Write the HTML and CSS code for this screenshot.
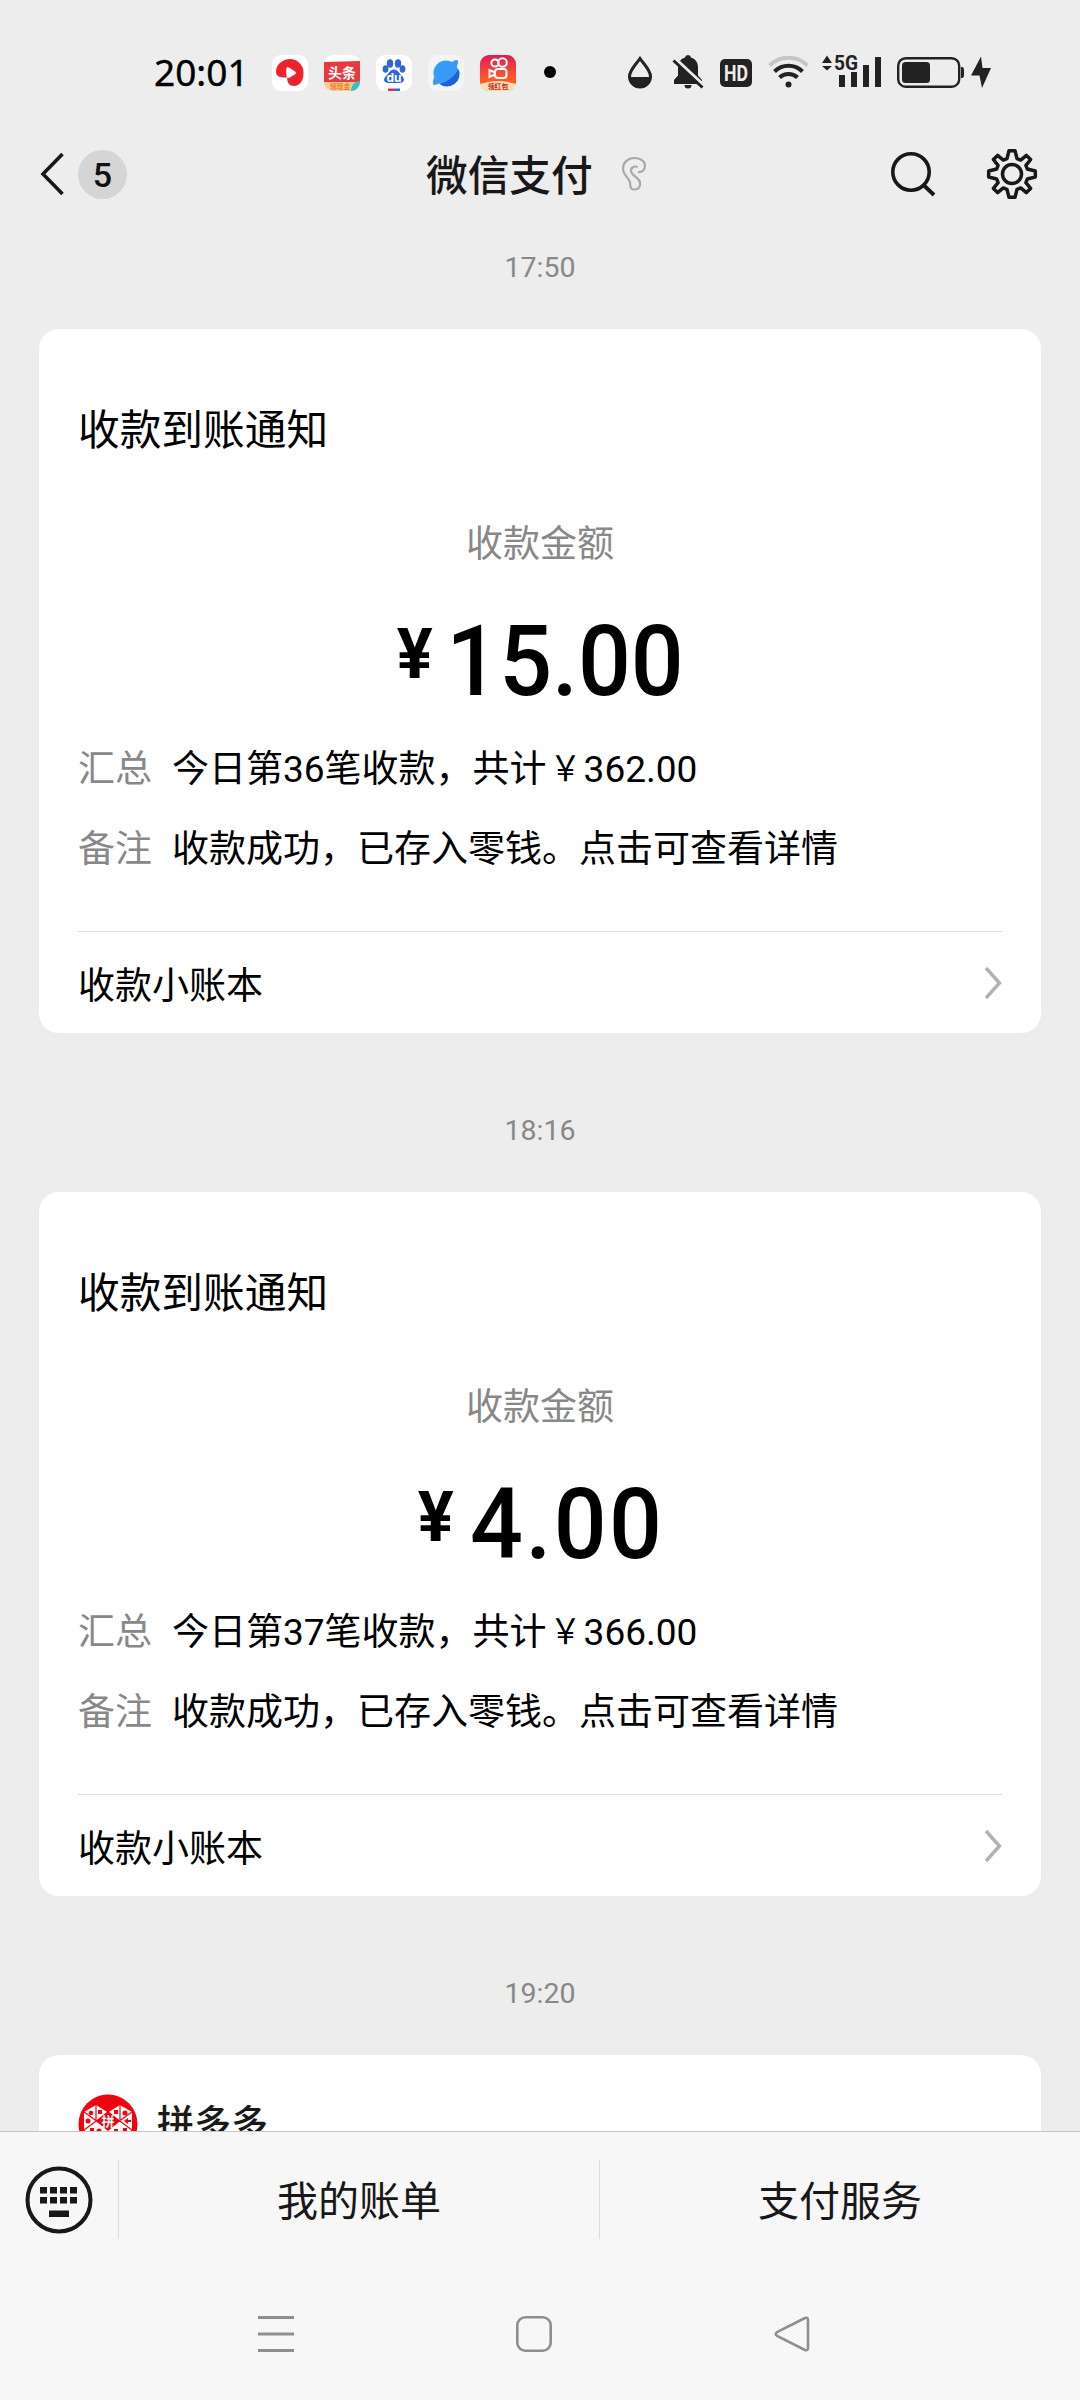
FILE: index.html
```html
<!DOCTYPE html>
<html lang="zh-CN">
<head>
<meta charset="utf-8">
<title>微信支付</title>
<link rel="stylesheet" href="styles.css">
</head>
<body>
<div class="screen">
  <div class="status">
    <div class="clock">20:01</div>
    <div class="apps">
      <svg width="36" height="36" viewBox="0 0 36 36"><rect width="36" height="36" rx="9" fill="#fff"/><path d="M18 4a13.500 13.500 0 0 1 13.500 14c0 8-4 13-9.500 13-5 0-6.500-3-7-8.500-5 .5-11-.5-11-5.500C4 9.500 10.500 4 18 4z" fill="#f0222b"/><path d="M14.500 13c.5-1 2-.8 3.300 0l5 3.300c1.500 1 1.500 2.200 0 3.100l-5 3c-1.600.9-3 .5-3.100-1-.6-3-.6-5.600-.2-8.400z" fill="#fff"/></svg>
      <svg width="36" height="36" viewBox="0 0 36 36"><rect width="36" height="36" rx="9" fill="#fff"/><path d="M0 7 36 6v22H0z" fill="#e8393f"/><path d="M0 27h36a9 9 0 0 1-9 9H9a9 9 0 0 1-9-9z" fill="#fbc98d"/><path d="M36 26v2a9 9 0 0 1-9 8c0-6 4-10 9-10z" fill="#35c0cf"/><text x="18" y="23" text-anchor="middle" class="toutiao">头条</text><text x="16" y="34" text-anchor="middle" class="tag tag-orange">领现金</text></svg>
      <svg width="36" height="36" viewBox="0 0 36 36"><rect width="36" height="36" rx="9" fill="#fff"/><g fill="#2f66d8"><ellipse cx="14" cy="8.500" rx="3.200" ry="4.200"/><ellipse cx="22" cy="8.500" rx="3.200" ry="4.200"/><ellipse cx="9.500" cy="14" rx="2.900" ry="3.800"/><ellipse cx="26.500" cy="14" rx="2.900" ry="3.800"/><path d="M18 14.500c4 0 5.500 4.500 8.500 7 3 3 1 6.500-3 6.500H12.500c-4 0-6-3.500-3-6.500 3-2.500 4.500-7 8.500-7z"/><path d="M18 33.500h6v2.500h-6z"/></g><path d="M12 33.500h6v2.500h-6z" fill="#e2343c"/><text x="18" y="26.500" text-anchor="middle" class="du">du</text></svg>
      <svg width="36" height="36" viewBox="0 0 36 36"><rect width="36" height="36" rx="9" fill="#f2f4f6"/><circle cx="18" cy="18" r="12.500" fill="#379af6"/><path d="M30.500 14a12.500 12.500 0 0 1-19 15C21 26 27 21 30.500 14z" fill="#2160d8"/><path d="M24 7c3-2 6-3 6 0 0 2-1 4-2 6zM6 22c-1 4-1.500 8 0 8s4-1 6-2z" fill="#379af6"/></svg>
      <svg width="36" height="36" viewBox="0 0 36 36"><defs><linearGradient id="ks" x1="0" y1="0" x2="0" y2="1"><stop offset="0" stop-color="#dc1c58"/><stop offset=".65" stop-color="#ff5a26"/></linearGradient></defs><rect width="36" height="36" rx="9" fill="url(#ks)"/><path d="M0 29Q18 23 36 29a9 9 0 0 1-9 7H9a9 9 0 0 1-9-7z" fill="#ffe0ae"/><g fill="none" stroke="#fff" stroke-width="2"><circle cx="15" cy="8" r="3.600"/><circle cx="22.500" cy="7.500" r="4.300"/><rect x="15" y="14" width="11.500" height="9" rx="3"/><path d="M15 17.500 9.500 15v7L15 19.500"/></g><text x="18" y="34" text-anchor="middle" class="tag tag-red">领红包</text></svg>
    </div>
    <div class="more-dot"></div>
    <div class="system">
      <svg width="24" height="34" viewBox="628 55 24 34"><path d="M640 58.500c4 6 10.500 11.500 10.500 18a10.500 10.500 0 0 1-21 0c0-6.500 6.500-12 10.500-18z" fill="none" stroke="#222" stroke-width="3"/><path d="M629.500 77h21a10.500 10.500 0 0 1-21 0z" fill="#222"/></svg>
      <svg class="bell" width="32" height="34" viewBox="672 55 32 34"><path d="M688 55a3 3 0 0 1 3 2.500c5 1.500 7 5.500 7 10v8l4 4.500v4h-28v-4l4-4.500v-8c0-4.500 2-8.500 7-10a3 3 0 0 1 3-2.500zM684.500 85h7a3.500 3.500 0 0 1-7 0z" fill="#222"/><path d="m675 59 29 27" stroke="#ededed" stroke-width="4"/><path d="m673.500 60.500 29 27" stroke="#222" stroke-width="3"/></svg>
      <svg class="hd" width="32" height="34" viewBox="720 55 32 34"><rect x="720" y="59" width="32" height="28" rx="5" fill="#222"/><text x="736" y="81" text-anchor="middle" class="hd-text" textLength="24" lengthAdjust="spacingAndGlyphs">HD</text></svg>
      <svg class="wifi" width="42" height="34" viewBox="768 55 42 34"><g fill="none" stroke-width="4"><path d="M769.500 65.500a27 27 0 0 1 38 0" stroke="#c6c6c6"/><path d="M774.500 71.500a20 20 0 0 1 28 0M779.500 77.500a13 13 0 0 1 18 0" stroke="#222"/></g><circle cx="788.500" cy="84.500" r="3" fill="#222"/></svg>
      <svg class="signal" width="60" height="34" viewBox="822 55 60 34"><path d="m822 63 5-7.500 5 7.500zM822 66h10l-5 4.500z" fill="#222"/><text x="834" y="70" class="net" textLength="24" lengthAdjust="spacingAndGlyphs">5G</text><path d="M839 75h6v12h-6zM851 72h6v15h-6zM863 65h6v22h-6zM875 57h6v30h-6z" fill="#222"/></svg>
      <svg class="battery" width="68" height="34" viewBox="897 55 68 34"><rect x="898.200" y="58.200" width="61" height="28.500" rx="7.500" fill="none" stroke="#222" stroke-width="2.400"/><rect x="902" y="62" width="28" height="21" rx="3.500" fill="#222"/><path d="M961 67c3 0 3 1 3 5.500s0 5.500-3 5.500z" fill="#222"/></svg>
      <svg class="bolt" width="20" height="34" viewBox="971 55 20 34"><path d="M981 56.500 971 75.500h8.500L982 88l9-20h-8.500z" fill="#222"/></svg>
    </div>
  </div>
  <div class="navbar">
    <svg class="back" width="24" height="44" viewBox="0 0 24 44"><path d="M22.500 2 3 22l19.500 20" fill="none" stroke="#181818" stroke-width="3.600"/></svg>
    <div class="badge">5</div>
    <div class="nav-title">微信支付</div>
    <svg class="ear" width="26" height="36" viewBox="0 0 26 36"><path d="M17 16c4.500.5 7-2.500 7-6.500C24 5 19.500 2 13.500 2 6.500 2 2 6.800 2 12.500c0 7 6 9 7 14 .6 3.500-.5 7 4.500 7 4.500 0 6-3 5.500-7-.6-5-8-6-9-11.500-.5-3.200 3.300-5.500 6.500-4" fill="none" stroke="#a9a9a9" stroke-width="2.200"/></svg>
    <svg class="search" width="48" height="48" viewBox="0 0 48 48"><circle cx="22" cy="22" r="18.200" fill="none" stroke="#181818" stroke-width="3.600"/><path d="m34.500 35 10.500 10" stroke="#181818" stroke-width="3.800"/></svg>
    <svg class="gear" width="52" height="52" viewBox="-26 -26 52 52"><g fill="none" stroke="#181818" stroke-width="3.500" stroke-linejoin="round"><circle r="9.500"/><path d="M-3 -23.300H3L5 -15.300 8.700 -13.900 14.400 -18.600 18.600 -14.400 13.900 -8.700 15.300 -5 23.300 -3V3L15.300 5 13.900 8.700 18.600 14.400 14.400 18.600 8.700 13.900 5 15.300 3 23.300H-3L-5 15.300 -8.700 13.900 -14.400 18.600 -18.600 14.400 -13.900 8.700 -15.300 5 -23.300 3V-3L-15.300 -5 -13.900 -8.700 -18.600 -14.400 -14.400 -18.600 -8.700 -13.900 -5 -15.300Z"/></g></svg>
  </div>
  <div class="chat">
    <div class="time">17:50</div>
    <div class="card">
      <div class="card-title">收款到账通知</div>
      <div class="label">收款金额</div>
      <div class="amount"><span class="yen">¥</span><span class="num">15.00</span></div>
      <div class="row"><span class="key">汇总</span><span>今日第36笔收款，共计<span class="yuan">￥</span>362.00</span></div>
      <div class="row"><span class="key">备注</span><span>收款成功，已存入零钱。点击可查看详情</span></div>
      <div class="card-foot"><span>收款小账本</span><svg width="18" height="34" viewBox="0 0 18 34"><path d="m2 2 13.500 15L2 32" fill="none" stroke="#b2b2b2" stroke-width="3.400"/></svg></div>
    </div>
    <div class="time">18:16</div>
    <div class="card">
      <div class="card-title">收款到账通知</div>
      <div class="label">收款金额</div>
      <div class="amount amount-short"><span class="yen">¥</span><span class="num">4.00</span></div>
      <div class="row"><span class="key">汇总</span><span>今日第37笔收款，共计<span class="yuan">￥</span>366.00</span></div>
      <div class="row"><span class="key">备注</span><span>收款成功，已存入零钱。点击可查看详情</span></div>
      <div class="card-foot"><span>收款小账本</span><svg width="18" height="34" viewBox="0 0 18 34"><path d="m2 2 13.500 15L2 32" fill="none" stroke="#b2b2b2" stroke-width="3.400"/></svg></div>
    </div>
    <div class="time">19:20</div>
    <div class="card shop">
      <svg width="60" height="60" viewBox="0 0 60 60"><circle cx="30" cy="30" r="29.500" fill="#f4000f"/><path d="M18 11 30 18.500 42 11 54 18v18L30 52 6 36V18z" fill="#fff"/><path d="M18 11v15M42 11v15M6 18l24 17M54 18 30 35M6 36l24-17.500M54 36 30 18.500" stroke="#f4000f" stroke-width="1.200"/><path d="m30 17 12 10-12 10-12-10z" fill="#f4000f"/><g fill="#f4000f"><circle cx="13" cy="19" r="2.300"/><path d="M20 16h4v4h-4zM36 16h4v4h-4z"/><circle cx="47" cy="19" r="2.500"/><circle cx="10" cy="27" r="2.500"/><path d="m46 27 4-3v2h3v2h-3v2z"/><circle cx="21" cy="37" r="2.500"/><path d="M36 35h4v4h-4zM45 34h4v4h-4zM12 34h4v4h-4z"/></g><text x="30" y="31.500" text-anchor="middle" class="pin">拼</text></svg>
      <span>拼多多</span>
    </div>
  </div>
  <div class="menu">
    <div class="kb"><svg width="68" height="68" viewBox="0 0 68 68"><circle cx="34" cy="34" r="31.500" fill="none" stroke="#181818" stroke-width="4"/><path d="M15 21h7v6.500h-7zM25 21h7v6.500h-7zM35 21h7v6.500h-7zM45 21h7v6.500h-7zM15 31h7v6.500h-7zM25 31h7v6.500h-7zM35 31h7v6.500h-7zM45 31h7v6.500h-7zM24 44.500h20v6.500H24z" fill="#181818"/></svg></div>
    <div class="menu-item">我的账单</div>
    <div class="menu-item">支付服务</div>
  </div>
  <div class="sysnav">
    <svg width="36" height="38" viewBox="0 0 36 38"><path d="M0 2.500h36M0 19h36M0 35.500h36" stroke="#8e8e8e" stroke-width="3"/></svg>
    <svg width="36" height="38" viewBox="0 0 36 38"><rect x="1.300" y="2.300" width="33.400" height="33.400" rx="8" fill="none" stroke="#8e8e8e" stroke-width="2.600"/></svg>
    <svg width="36" height="38" viewBox="0 0 36 38"><path d="M31 3 3 17.200q-2.500 1.800 0 3.600L31 35q3 1 3-2V5q0-3-3-2z" fill="none" stroke="#8e8e8e" stroke-width="2.600" stroke-linejoin="round"/></svg>
  </div>
</div>
</body>
</html>
```
FILE: styles.css
```css
* { box-sizing: border-box; }
body { margin: 0; font-family: Roboto, "Noto Sans CJK SC", sans-serif; color: #000; }
svg { display: block; flex: none; overflow: visible; }
.screen { width: 1080px; height: 2400px; display: flex; flex-direction: column; background: #ededed; overflow: hidden; }

.status { height: 114px; padding: 32px 0 0 154px; display: flex; align-items: flex-start; flex: none; }
.clock { width: 118px; font: 400 37px/80px "Noto Sans", sans-serif; -webkit-text-stroke: .4px #000; }
.apps { display: flex; gap: 16px; padding-top: 23px; }
.more-dot { width: 12px; height: 12px; border-radius: 50%; background: #000; margin: 34px 0 0 28px; }
.system { display: flex; padding-top: 23px; margin-left: 72px; }
.bell { margin-left: 20px; }
.hd, .wifi { margin-left: 16px; }
.signal { margin-left: 12px; }
.battery { margin-left: 15px; }
.bolt { margin-left: 6px; }
.toutiao { font: 700 14px "Noto Sans CJK SC", sans-serif; fill: #fff; }
.tag { font: 700 6.800px "Noto Sans CJK SC", sans-serif; }
.tag-orange { fill: #e8802c; }
.tag-red { fill: #c81a1a; }
.du { font: 700 12px Inter, sans-serif; fill: #fff; }
.hd-text { font: 700 22px Roboto, sans-serif; fill: #ededed; }
.net { font: 700 20px Roboto, sans-serif; fill: #222; }

.navbar { height: 121px; border-bottom: 1px solid #e8e8e8; display: flex; align-items: center; flex: none; padding-left: 40px; }
.back { margin-right: 14px; }
.badge { width: 49px; height: 49px; border-radius: 50%; background: #d5d5d5; color: #111; font-size: 34px; font-weight: 500; line-height: 50px; text-align: center; }
.nav-title { margin-left: 299px; width: 168px; padding-top: 5px; font-size: 41.700px; font-weight: 500; line-height: 60px; color: #181818; white-space: nowrap; }
.ear { margin-left: 27px; }
.search { margin-left: 242px; }
.gear { margin-left: 49px; }

.chat { flex: 1; min-height: 0; overflow: hidden; padding: 0 39px; display: flex; flex-direction: column; }
.time { height: 159px; flex: none; text-align: center; font-size: 28.500px; line-height: 34px; color: #888; padding-top: 81px; }
.time:first-child { height: 94px; padding-top: 16px; }
.card { height: 704px; flex: none; background: #fff; border-radius: 20px; padding: 72px 39px 0; display: flex; flex-direction: column; font-size: 37px; }
.card-title { font-size: 41.700px; line-height: 60px; }
.label { margin-top: 54px; line-height: 60px; text-align: center; color: #888; }
.amount { margin-top: 37px; height: 118px; display: flex; justify-content: center; align-items: flex-start; font-weight: 500; }
.yen { font-size: 70px; line-height: 85px; font-weight: 700; transform: scaleX(.96); margin-right: 12px; }
.num { font-size: 98px; line-height: 100px; transform: scaleX(.95); margin: 0 -6px; }
.amount-short .yen { margin-right: 17px; }
.amount-short .num { letter-spacing: 2.500px; }
.row { display: flex; gap: 20px; line-height: 80px; white-space: nowrap; }
.key { color: #888; width: 74px; }
.yuan { display: inline-block; line-height: 1; transform: scale(.85, .95); }
.card-foot { margin-top: 41px; height: 102px; border-top: 1px solid #dedede; display: flex; align-items: center; justify-content: space-between; }
.shop { flex-direction: row; align-items: flex-start; padding-top: 39px; gap: 19px; color: #1a1a1a; font-weight: 500; line-height: 62px; }
.pin { font: 700 13px "Noto Sans CJK SC", sans-serif; fill: #fff; }

.menu { height: 131px; flex: none; background: #f7f7f7; border-top: 1px solid #c6c6c6; display: flex; padding-top: 28px; }
.kb { width: 118px; padding: 6px 0 0 25px; }
.menu-item { flex: 1; height: 79px; border-left: 1px solid #dcdcdc; text-align: center; font-size: 41px; line-height: 85px; color: #181818; }
.sysnav { height: 138px; flex: none; background: #f7f7f7; display: flex; gap: 222px; padding: 53px 0 0 258px; }
```
